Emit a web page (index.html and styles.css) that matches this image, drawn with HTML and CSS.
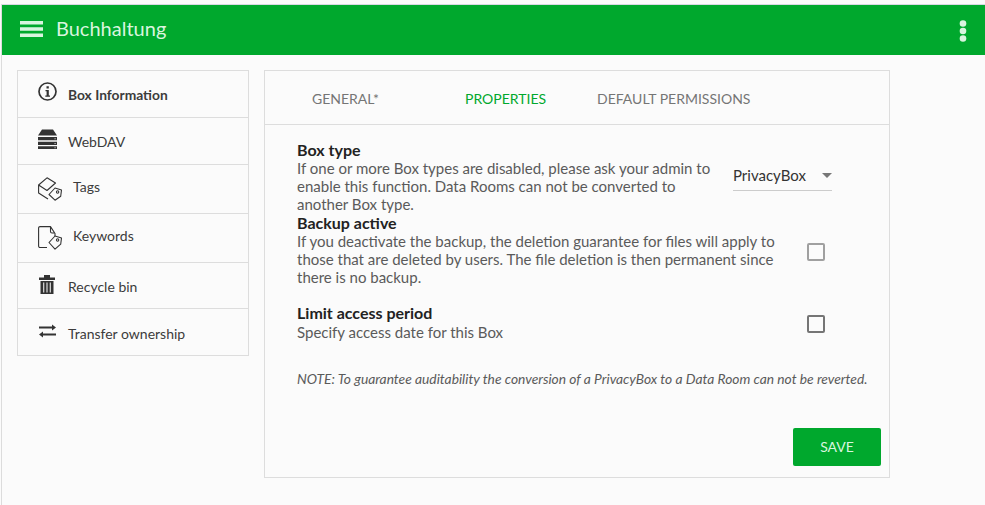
FILE: index.html
```html
<!DOCTYPE html>
<html lang="en">
<head>
<meta charset="utf-8">
<title>Buchhaltung</title>
<link rel="stylesheet" href="styles.css">
</head>
<body>
<div class="frame">
  <header class="topbar">
    <svg class="burger" width="23" height="16" viewBox="0 0 23 16"><path d="M0 0h23v3.600H0zM0 6.200h23v3.600H0zM0 12.400h23V16H0z" fill="currentColor"/></svg>
    <h1 class="title">Buchhaltung</h1>
    <svg class="dots" width="8" height="22" viewBox="0 0 8 22"><circle cx="4" cy="3.500" r="3.300" fill="currentColor"/><circle cx="4" cy="11" r="3.300" fill="currentColor"/><circle cx="4" cy="18.500" r="3.300" fill="currentColor"/></svg>
  </header>
  <main class="content">
    <nav class="sidenav">
      <a class="navitem navitem-info active">
        <svg class="navicon" width="19" height="19" viewBox="0 0 19 19"><circle cx="9.500" cy="9.500" r="8.500" fill="none" stroke="#333" stroke-width="1.700"/><path d="M7.500 8h3.300v5.500h1.200v1.200H7.300v-1.200h1.300V9.200H7.500zM8.500 4.300h2.300v2.300H8.500z" fill="#333"/></svg>
        <span>Box Information</span>
      </a>
      <a class="navitem navitem-webdav">
        <svg class="navicon" width="19" height="20" viewBox="0 0 19 20"><path d="M4 .5h11L19 6.500H0zM0 8h19v3.300H0zM0 12.700h19V16H0zM0 17.200h19V20H0z" fill="#333"/><path d="M16.500 9.200h1.200v1h-1.200zM16.500 13.900h1.200v1h-1.200zM16.500 18.200h1.200v1h-1.200z" fill="#ccc"/></svg>
        <span>WebDAV</span>
      </a>
      <a class="navitem navitem-tags">
        <svg class="navicon" width="24" height="24" viewBox="0 0 24 24" fill="none" stroke="#333" stroke-width="1.100" stroke-linejoin="round"><path d="M9 .8L.6 8l8.400 5.500L17.500 6zM.6 8v8l9.400 6"/><path d="M11 17.500l6-6.500 6.500 2-.8 6.200-5.700 4z" fill="#fbfbfb"/><circle cx="19.600" cy="15" r="1.200"/></svg>
        <span>Tags</span>
      </a>
      <a class="navitem navitem-keywords">
        <svg class="navicon" width="24" height="24" viewBox="0 0 24 24" fill="none" stroke="#333" stroke-width="1.100" stroke-linejoin="round"><path d="M9 21.500H2a1.400 1.400 0 0 1-1.400-1.400V2A1.400 1.400 0 0 1 2 .6h10.500L17 7.500v3M12.500 .8v4.700a1.500 1.500 0 0 0 1.500 1.500h3"/><path d="M11 16.500l6-6.500 6.500 2-.8 6.200-5.700 5z" fill="#fbfbfb"/><circle cx="19.600" cy="14" r="1.200"/></svg>
        <span>Keywords</span>
      </a>
      <a class="navitem navitem-bin">
        <svg class="navicon" width="16" height="19" viewBox="0 0 16 19"><path d="M5 0h6v2.600h5v2.400H0V2.600h5z" fill="#333"/><path d="M1.500 6h13v13h-13z" fill="#333"/><path d="M4.700 7.500V17.500M8 7.500V17.500M11.300 7.500V17.500" stroke="#ddd" stroke-width="1.200"/></svg>
        <span>Recycle bin</span>
      </a>
      <a class="navitem navitem-transfer">
        <svg class="navicon" width="17" height="14" viewBox="0 0 17 14"><path d="M0 2.500h13V.5l4 3-4 3v-2H0zM17 9.500H4v-2l-4 3 4 3v-2h13z" fill="#333"/></svg>
        <span>Transfer ownership</span>
      </a>
    </nav>
    <section class="panel">
      <div class="tabs">
        <span class="tab tab-general">GENERAL*</span>
        <span class="tab tab-props">PROPERTIES</span>
        <span class="tab tab-perm">DEFAULT PERMISSIONS</span>
      </div>
      <div class="body">
        <div class="row row-type">
          <div class="text">
            <h2>Box type</h2>
            <p>If one or more Box types are disabled, please ask your admin to enable this function. Data Rooms can not be converted to another Box type.</p>
          </div>
          <div class="select"><span>PrivacyBox</span><i class="caret"></i></div>
        </div>
        <div class="row row-backup">
          <div class="text">
            <h2>Backup active</h2>
            <p>If you deactivate the backup, the deletion guarantee for files will apply to those that are deleted by users. The file deletion is then permanent since there is no backup.</p>
          </div>
          <span class="check check-off"></span>
        </div>
        <div class="row row-limit">
          <div class="text">
            <h2>Limit access period</h2>
            <p>Specify access date for this Box</p>
          </div>
          <span class="check"></span>
        </div>
        <p class="note">NOTE: To guarantee auditability the conversion of a PrivacyBox to a Data Room can not be reverted.</p>
        <div class="actions"><button class="save">SAVE</button></div>
      </div>
    </section>
  </main>
</div>
</body>
</html>
```
FILE: styles.css
```css
* { box-sizing: border-box; }
html, body { margin: 0; height: 100%; }
body { background: #fbfbfb; font-family: Lato, "Liberation Sans", sans-serif; color: #333; overflow: hidden; }
.frame { height: 501px; margin: 4px 0 0 1px; border-top: 1px solid #d8d8e2; border-left: 1px solid #dcdcdc; }
.topbar { height: 50px; background: #00a82d; color: #d9f5df; display: flex; align-items: center; padding: 0 18px; }
.burger { flex: none; margin-top: -2px; }
.title { margin: -4px 0 0 13px; font-size: 20px; font-weight: 400; flex: 1; }
.dots { flex: none; margin-top: 2px; }
.content { display: flex; align-items: flex-start; padding: 15px 0 0 15px; gap: 15px; }
.sidenav { width: 232px; border: 1px solid #ddd; flex: none; }
.navitem { display: flex; align-items: center; padding-left: 20px; font-size: 14px; color: #3c3c3c; border-bottom: 1px solid #ddd; }
.navitem:last-child { border-bottom: 0; }
.navicon { flex: none; }
.navitem-info { height: 47px; }
.navitem-info .navicon { margin-bottom: 6px; margin-right: 11px; }
.navitem-info span { font-weight: 700; font-size: 13.800px; }
.navitem-webdav { height: 47px; }
.navitem-webdav .navicon { margin-bottom: 5px; margin-right: 11px; }
.navitem-tags { height: 49px; }
.navitem-tags .navicon { margin-right: 11px; }
.navitem-tags span { margin-bottom: 6px; }
.navitem-keywords { height: 49px; }
.navitem-keywords .navicon { margin-right: 11px; }
.navitem-keywords span { margin-bottom: 6px; }
.navitem-bin { height: 46px; padding-left: 21px; }
.navitem-bin .navicon { margin-bottom: 3px; margin-right: 13px; }
.navitem-bin span { margin-top: 1px; }
.navitem-transfer { height: 46px; padding-left: 21px; }
.navitem-transfer .navicon { margin-bottom: 2px; margin-right: 12px; }
.navitem-transfer span { margin-top: 2px; }
.panel { width: 626px; height: 408px; border: 1px solid #ddd; flex: none; display: flex; flex-direction: column; }
.tabs { height: 54px; padding-top: 2px; border-bottom: 1px solid #ddd; display: flex; align-items: center; font-size: 14px; color: #757575; flex: none; }
.tab-general { margin-left: 47px; width: 153px; }
.tab-props { color: #00a82d; width: 132px; }
.body { padding: 15px 8px 0 32px; flex: 1; display: flex; flex-direction: column; }
.row { display: flex; align-items: center; }
.text { flex: none; }
.row-type .text { width: 424px; }
.row-backup .text, .row-limit .text { width: 490px; }
.text h2 { margin: 0; font-size: 16px; font-weight: 700; line-height: 19px; color: #222; }
.text p { margin: 0; font-size: 15px; line-height: 18px; color: #5a5a5a; }
.select { width: 99px; margin: -4px 0 0 12px; height: 32px; padding-top: 2px; border-bottom: 1px solid #ccc; font-size: 15px; display: flex; justify-content: space-between; align-items: center; }
.caret { width: 0; height: 0; border: 5px solid transparent; border-top-color: #777; border-bottom-width: 0; }
.check { width: 18px; height: 18px; border: 2px solid #757575; border-radius: 2px; margin-left: 20px; }
.check-off { border-color: #a0a0a0; margin-top: 5px; }
.row-limit { margin-top: 17px; }
.row-limit h2 { margin-bottom: 1px; }
.row-limit .check { margin-top: 4px; }
.note { margin: 29px 0 0; font-size: 13.800px; line-height: 17px; font-style: italic; color: #5a5a5a; white-space: nowrap; }
.actions { margin-top: auto; display: flex; justify-content: flex-end; padding-bottom: 11px; }
.save { width: 88px; height: 38px; padding: 0 0 2px; border: 0; border-radius: 2px; background: #00a82d; color: #d9f5df; font: 14px Lato, sans-serif; }
```
